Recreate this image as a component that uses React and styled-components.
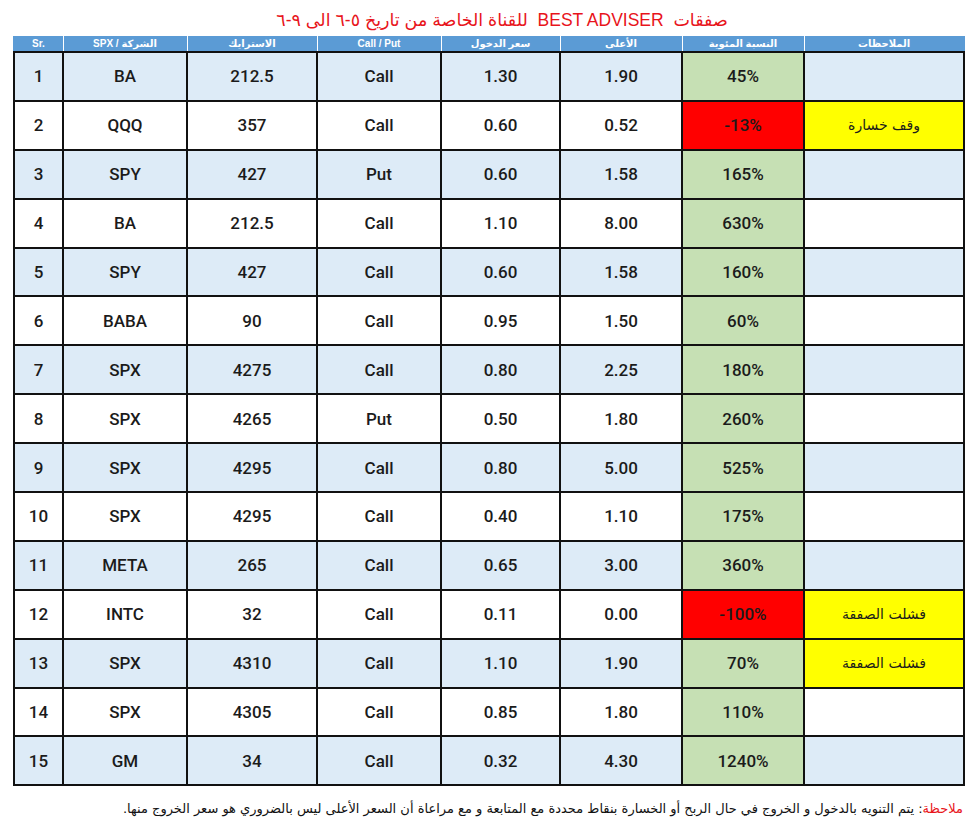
import React from "react"
import styled, { createGlobalStyle } from "styled-components"

const Global = createGlobalStyle`
  html, body { margin: 0; padding: 0; background: #ffffff; }
  body { font-family: "Roboto", "DejaVu Sans", sans-serif; }
`

const COLS = "47px 122px 128px 122px 117px 120px 120px 158px"

const Page = styled.div`
  width: 978px;
  height: 826px;
  display: flex;
  flex-direction: column;
  padding: 0 13px;
  box-sizing: border-box;
`
const Title = styled.h1`
  margin: 0;
  height: 36px;
  display: flex;
  align-items: center;
  justify-content: center;
  padding-left: 26px;
  padding-top: 4px;
  box-sizing: border-box;
  direction: rtl;
  color: #e8141b;
  font-family: "Liberation Sans", "DejaVu Sans", sans-serif;
  font-weight: 400;
  font-size: 17.5px;
  white-space: pre;
`
const HeadRow = styled.div`
  display: grid;
  grid-template-columns: ${COLS};
  column-gap: 2px;
  padding: 0 2px;
  height: 15px;
  background: #5b9bd5;
`
const HeadCell = styled.div`
  display: flex;
  align-items: center;
  justify-content: center;
  color: #ffffff;
  font-family: "Liberation Sans", "DejaVu Sans", sans-serif;
  font-weight: 700;
  font-size: 10px;
  white-space: nowrap;
  &:not(:first-child) { box-shadow: -1px 0 0 #ffffff; }
`
const Body = styled.div`
  display: grid;
  grid-template-columns: ${COLS};
  grid-auto-rows: 46.9px;
  gap: 2px;
  padding: 2px;
  background: #111111;
`
const Cell = styled.div`
  display: flex;
  align-items: center;
  justify-content: center;
  background: ${(p) => p.$bg};
  color: #1b1b1b;
  font-family: ${(p) => (p.$arabic ? '"DejaVu Sans", sans-serif' : '"Roboto", sans-serif')};
  font-weight: ${(p) => (p.$arabic ? 400 : 500)};
  font-size: ${(p) => (p.$arabic ? "14px" : "17px")};
  direction: ${(p) => (p.$arabic ? "rtl" : "ltr")};
`
const Note = styled.p`
  margin: 0;
  padding: 15px 2px 0 0;
  direction: rtl;
  text-align: right;
  font-family: "DejaVu Sans", sans-serif;
  font-size: 13px;
  color: #111111;
  white-space: nowrap;
`
const Red = styled.span`
  color: #e8141b;
`

const BLUE = "#ddebf7"
const GREEN = "#c6e0b4"
const RED = "#ff0000"
const YELLOW = "#ffff00"

const headers = ["Sr.", "SPX / الشركة", "الاسترايك", "Call / Put", "سعر الدخول", "الأعلى", "النسبة المئوية", "الملاحظات"]

const trades = [
  ["BA", "212.5", "Call", "1.30", "1.90", "45%"],
  ["QQQ", "357", "Call", "0.60", "0.52", "-13%", "وقف خسارة"],
  ["SPY", "427", "Put", "0.60", "1.58", "165%"],
  ["BA", "212.5", "Call", "1.10", "8.00", "630%"],
  ["SPY", "427", "Call", "0.60", "1.58", "160%"],
  ["BABA", "90", "Call", "0.95", "1.50", "60%"],
  ["SPX", "4275", "Call", "0.80", "2.25", "180%"],
  ["SPX", "4265", "Put", "0.50", "1.80", "260%"],
  ["SPX", "4295", "Call", "0.80", "5.00", "525%"],
  ["SPX", "4295", "Call", "0.40", "1.10", "175%"],
  ["META", "265", "Call", "0.65", "3.00", "360%"],
  ["INTC", "32", "Call", "0.11", "0.00", "-100%", "فشلت الصفقة"],
  ["SPX", "4310", "Call", "1.10", "1.90", "70%", "فشلت الصفقة"],
  ["SPX", "4305", "Call", "0.85", "1.80", "110%"],
  ["GM", "34", "Call", "0.32", "4.30", "1240%"],
]

export default function App() {
  return (
    <Page>
      <Global />
      <Title>{"صفقات  BEST ADVISER  للقناة الخاصة من تاريخ ٥-٦ الى ٩-٦"}</Title>
      <HeadRow>
        {headers.map((h) => (
          <HeadCell key={h}>{h}</HeadCell>
        ))}
      </HeadRow>
      <Body>
        {trades.map((t, i) => {
          const rowBg = i % 2 === 0 ? BLUE : "#ffffff"
          const [name, strike, type, entry, high, pct, note] = t
          const loss = pct.startsWith("-")
          return (
            <React.Fragment key={i}>
              <Cell $bg={rowBg}>{i + 1}</Cell>
              <Cell $bg={rowBg}>{name}</Cell>
              <Cell $bg={rowBg}>{strike}</Cell>
              <Cell $bg={rowBg}>{type}</Cell>
              <Cell $bg={rowBg}>{entry}</Cell>
              <Cell $bg={rowBg}>{high}</Cell>
              <Cell $bg={loss ? RED : GREEN}>{pct}</Cell>
              <Cell $bg={note ? YELLOW : rowBg} $arabic>{note || ""}</Cell>
            </React.Fragment>
          )
        })}
      </Body>
      <Note>
        <Red>ملاحظة</Red>: يتم التنويه بالدخول و الخروج في حال الربح أو الخسارة بنقاط محددة مع المتابعة و مع مراعاة أن السعر الأعلى ليس بالضروري هو سعر الخروج منها.
      </Note>
    </Page>
  )
}
